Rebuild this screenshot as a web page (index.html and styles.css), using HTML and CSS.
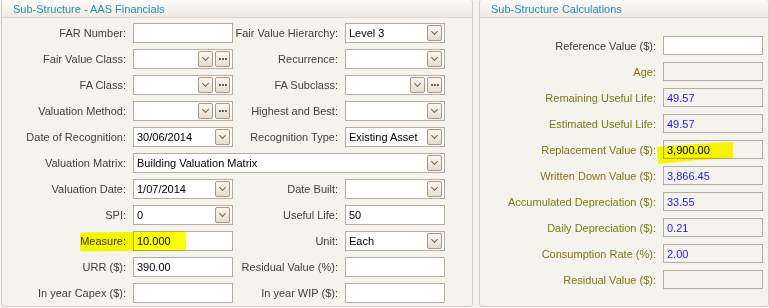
FILE: index.html
```html
<!DOCTYPE html>
<html lang="en">
<head>
    <meta charset="UTF-8">
    <title>Sub-Structure</title>
    <link rel="stylesheet" href="styles.css">
</head>
<body>

    <div class="page">

        <!-- AAS financials -->
        <section class="panel panel-aas">
            <h2 class="panel-title">Sub-Structure - AAS Financials</h2>
            <div class="form-grid">
                <label>FAR Number:</label>
                <div class="field"></div>
                <label>Fair Value Hierarchy:</label>
                <div class="field"><span class="val">Level 3</span><span class="btn drop"></span></div>

                <label>Fair Value Class:</label>
                <div class="field"><span class="val"></span><span class="btn drop"></span><span class="btn more"></span></div>
                <label>Recurrence:</label>
                <div class="field"><span class="val"></span><span class="btn drop"></span></div>

                <label>FA Class:</label>
                <div class="field"><span class="val"></span><span class="btn drop"></span><span class="btn more"></span></div>
                <label>FA Subclass:</label>
                <div class="field"><span class="val"></span><span class="btn drop"></span><span class="btn more"></span></div>

                <label>Valuation Method:</label>
                <div class="field"><span class="val"></span><span class="btn drop"></span><span class="btn more"></span></div>
                <label>Highest and Best:</label>
                <div class="field"><span class="val"></span><span class="btn drop"></span></div>

                <label>Date of Recognition:</label>
                <div class="field"><span class="val">30/06/2014</span><span class="btn drop"></span></div>
                <label>Recognition Type:</label>
                <div class="field"><span class="val">Existing Asset</span><span class="btn drop"></span></div>

                <label>Valuation Matrix:</label>
                <div class="field wide"><span class="val">Building Valuation Matrix</span><span class="btn drop"></span></div>

                <label>Valuation Date:</label>
                <div class="field"><span class="val">1/07/2014</span><span class="btn drop"></span></div>
                <label>Date Built:</label>
                <div class="field"><span class="val"></span><span class="btn drop"></span></div>

                <label>SPI:</label>
                <div class="field"><span class="val">0</span><span class="btn drop"></span></div>
                <label>Useful Life:</label>
                <div class="field"><span class="val">50</span></div>

                <label>Measure:</label>
                <div class="field"><span class="val">10.000</span></div>
                <label>Unit:</label>
                <div class="field"><span class="val">Each</span><span class="btn drop"></span></div>

                <label>URR ($):</label>
                <div class="field"><span class="val">390.00</span></div>
                <label>Residual Value (%):</label>
                <div class="field"></div>

                <label>In year Capex ($):</label>
                <div class="field"></div>
                <label>In year WIP ($):</label>
                <div class="field"></div>
            </div>
        </section>

        <!-- Calculations -->
        <section class="panel panel-calc">
            <h2 class="panel-title">Sub-Structure Calculations</h2>
            <div class="calc-grid">
                <label class="plain">Reference Value ($):</label>
                <div class="field editable"></div>

                <label>Age:</label>
                <div class="field"></div>

                <label>Remaining Useful Life:</label>
                <div class="field"><span class="val">49.57</span></div>

                <label>Estimated Useful Life:</label>
                <div class="field"><span class="val">49.57</span></div>

                <label>Replacement Value ($):</label>
                <div class="field"><span class="val dark">3,900.00</span></div>

                <label>Written Down Value ($):</label>
                <div class="field"><span class="val">3,866.45</span></div>

                <label>Accumulated Depreciation ($):</label>
                <div class="field"><span class="val">33.55</span></div>

                <label>Daily Depreciation ($):</label>
                <div class="field"><span class="val">0.21</span></div>

                <label>Consumption Rate (%):</label>
                <div class="field"><span class="val">2.00</span></div>

                <label>Residual Value ($):</label>
                <div class="field"></div>
            </div>
        </section>

        <!-- marker highlights drawn over the form -->
        <span class="marker marker-measure"></span>
        <svg class="marker marker-replace" width="80" height="26" viewBox="0 0 80 26">
            <polygon points="1,6 40,3 77,1 77,17 42,19 2,23" fill="#ffff00"/>
        </svg>
    </div>

</body>
</html>
```

FILE: styles.css
```css
* {
    margin: 0;
    padding: 0;
    box-sizing: border-box;
}

body {
    font-family: "Liberation Sans", Arial, sans-serif;
    font-size: 11px;
    background-color: #f5f3ee;
    overflow: hidden;
}

.page {
    position: relative;
    display: flex;
    gap: 6px;
    margin-top: -1px;
    padding-left: 1px;
    height: 308px;
}

/* Panels */
.panel {
    background-color: #f5f3ee;
    border: 1px solid #d5cdc1;
    border-radius: 3px;
    overflow: hidden;
}

.panel-aas {
    width: 472px;
}

.panel-calc {
    width: 290px;
}

.panel-title {
    height: 18px;
    padding-left: 11px;
    font-size: 11px;
    font-weight: normal;
    line-height: 18px;
    color: #2a8bc3;
    background: linear-gradient(#fcfbf9, #efebe3);
    border-bottom: 1px solid #ddd6ca;
}

/* Form rows */
.form-grid {
    display: grid;
    grid-template-columns: 131px 100px 112px 100px;
    grid-auto-rows: 20px;
    row-gap: 6px;
    padding-top: 5px;
}

.calc-grid {
    display: grid;
    grid-template-columns: 183px 100px;
    grid-auto-rows: 19px;
    row-gap: 7px;
    padding-top: 18px;
}

label {
    display: flex;
    align-items: center;
    justify-content: flex-end;
    padding-right: 7px;
    color: #463d36;
    white-space: nowrap;
}

.calc-grid label {
    color: #857512;
}

.calc-grid label.plain {
    color: #463d36;
}

.field {
    display: flex;
    align-items: center;
    gap: 2px;
    padding: 0 2px 0 3px;
    background-color: #fff;
    border: 1px solid #b5aba1;
}

.field.wide {
    grid-column: span 3;
}

.calc-grid .field {
    background-color: #f5f3ee;
    padding-left: 3px;
}

.calc-grid .field.editable {
    background-color: #fff;
}

.val {
    flex: 1;
    color: #000;
    white-space: nowrap;
}

.calc-grid .val {
    color: #1c1cf5;
}

.calc-grid .val.dark {
    color: #000;
}

/* Little combo buttons */
.btn {
    display: flex;
    align-items: center;
    justify-content: center;
    width: 15px;
    height: 16px;
    border: 1px solid #a69683;
    border-radius: 2px;
    background: linear-gradient(#fbf8f1, #e6ddcd);
}

.drop::after {
    content: "";
    width: 4px;
    height: 4px;
    margin-top: -3px;
    border-right: 1px solid #6f6152;
    border-bottom: 1px solid #6f6152;
    transform: rotate(45deg);
}

.more::after {
    content: "";
    width: 2px;
    height: 2px;
    background: #6f6152;
    box-shadow: -3px 0 #6f6152, 3px 0 #6f6152;
}

/* Yellow highlighter marks */
.marker {
    position: absolute;
    mix-blend-mode: multiply;
    pointer-events: none;
}

.marker-measure {
    left: 80px;
    top: 233px;
    width: 106px;
    height: 19px;
    background-color: #ffff00;
    border-radius: 2px;
    transform: rotate(-0.6deg);
}

.marker-replace {
    left: 656px;
    top: 142px;
}
```
